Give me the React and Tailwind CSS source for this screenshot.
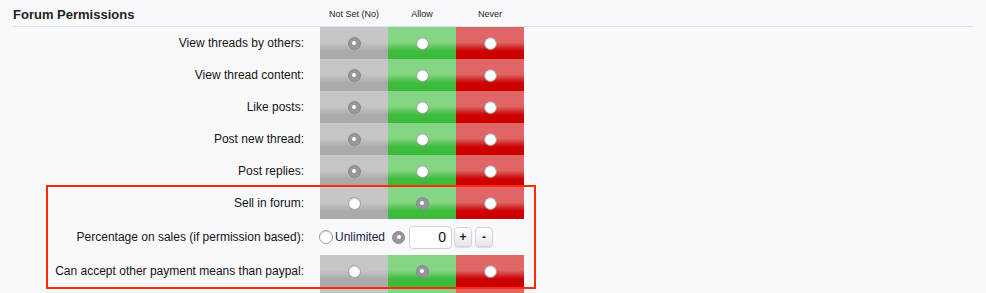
import React from "react";

const Off = () => (
  <span className="block w-[13px] h-[13px] rounded-full bg-white border border-[#9c9c9c] shadow-[inset_0_1px_1px_rgba(0,0,0,0.15)]" />
);
const On = () => (
  <span className="flex items-center justify-center w-[13px] h-[13px] rounded-full bg-[#96969c] border border-[#88888e]">
    <span className="block w-[4px] h-[4px] rounded-full bg-white" />
  </span>
);

const Cells = ({ sel }) => (
  <div className="flex ml-[16px]">
    <div className="w-[68px] h-[32px] flex items-center justify-center bg-[linear-gradient(to_bottom,#c6c6c6_0%,#c6c6c6_48%,#aaaaaa_75%,#aaaaaa_100%)]">
      {sel === 0 ? <On /> : <Off />}
    </div>
    <div className="w-[68px] h-[32px] flex items-center justify-center bg-[linear-gradient(to_bottom,#84d584_0%,#84d584_48%,#3dbb3d_75%,#3dbb3d_100%)]">
      {sel === 1 ? <On /> : <Off />}
    </div>
    <div className="w-[68px] h-[32px] flex items-center justify-center bg-[linear-gradient(to_bottom,#e06565_0%,#e06565_48%,#cc0000_75%,#cc0000_100%)]">
      {sel === 2 ? <On /> : <Off />}
    </div>
  </div>
);

const Row = ({ label, sel }) => (
  <div className="flex items-center h-[32px]">
    <div className="w-[291px] text-right text-[12px] text-[#141414]">{label}</div>
    <Cells sel={sel} />
  </div>
);

export default function App() {
  return (
    <div className="relative min-h-screen bg-[#f9f9fc] font-['Liberation_Sans',Arial,sans-serif] overflow-hidden">
      <div className="pl-[13px] pr-[13px]">
        <div className="flex items-center h-[27px] border-b border-[#cfe7fb] pt-[3px]">
          <div className="w-[307px] text-[13px] font-bold text-[#222]">Forum Permissions</div>
          <div className="w-[68px] text-center text-[9px] text-[#222]">Not Set (No)</div>
          <div className="w-[68px] text-center text-[9px] text-[#222]">Allow</div>
          <div className="w-[68px] text-center text-[9px] text-[#222]">Never</div>
        </div>
        <Row label="View threads by others:" sel={0} />
        <Row label="View thread content:" sel={0} />
        <Row label="Like posts:" sel={0} />
        <Row label="Post new thread:" sel={0} />
        <Row label="Post replies:" sel={0} />
        <Row label="Sell in forum:" sel={1} />
        <div className="flex items-center h-[36px]">
          <div className="w-[291px] text-right text-[12px] text-[#141414]">Percentage on sales (if permission based):</div>
          <div className="flex items-center ml-[15px]">
            <span className="block w-[14px] h-[14px] rounded-full bg-white border border-[#9c9c9c] shadow-[inset_0_1px_1px_rgba(0,0,0,0.15)]" />
            <span className="ml-[2px] text-[12px] text-[#1a1a48]">Unlimited</span>
            <span className="ml-[7px]"><On /></span>
            <div className="ml-[4px] w-[43px] h-[23px] bg-white border border-[#cfcfd6] rounded-[4px] flex items-center justify-end pr-[5px] text-[14px] text-[#111]">0</div>
            <div className="ml-[2px] w-[18px] h-[20px] rounded-[4px] border border-[#d4d4dc] bg-[linear-gradient(to_bottom,#ffffff,#e6e6ee)] flex items-center justify-center text-[12px] font-bold text-[#222] shadow-[0_1px_1px_rgba(0,0,0,0.12)]">+</div>
            <div className="ml-[3px] w-[18px] h-[20px] rounded-[4px] border border-[#d4d4dc] bg-[linear-gradient(to_bottom,#ffffff,#e6e6ee)] flex items-center justify-center text-[12px] font-bold text-[#222] shadow-[0_1px_1px_rgba(0,0,0,0.12)]">-</div>
          </div>
        </div>
        <Row label="Can accept other payment means than paypal:" sel={1} />
        <Row label="" sel={0} />
      </div>
      <div className="absolute left-[46px] top-[185px] w-[490px] h-[104px] border-2 border-[#ff2b06] pointer-events-none" />
    </div>
  );
}
